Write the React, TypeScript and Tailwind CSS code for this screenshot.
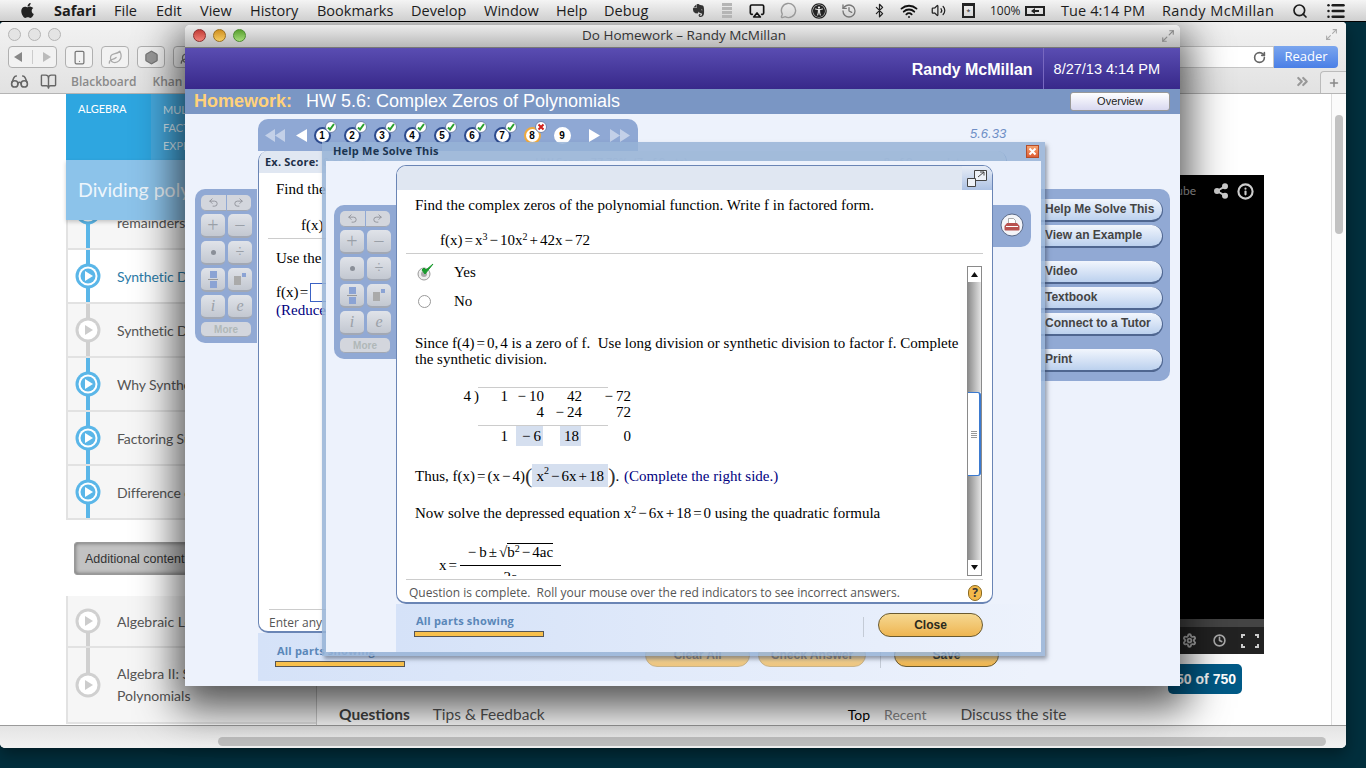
import { Airplay, Bluetooth, BookOpen, ChevronsRight, Glasses, Hexagon, Info, Leaf, List, Maximize2, MessageCircle, Plus, Redo2, RotateCw, Search, Settings, Share2, Smartphone, Undo2, Volume2, Wifi, History, Clock } from 'lucide-react'
import { FaApple, FaEvernote, FaUniversalAccess } from 'react-icons/fa'

const menus = [
  { label: 'File', w: 'w-[42px]' },
  { label: 'Edit', w: 'w-[44px]' },
  { label: 'View', w: 'w-[50px]' },
  { label: 'History', w: 'w-[67px]' },
  { label: 'Bookmarks', w: 'w-[94px]' },
  { label: 'Develop', w: 'w-[73px]' },
  { label: 'Window', w: 'w-[72px]' },
  { label: 'Help', w: 'w-[48px]' },
  { label: 'Debug', w: 'w-[60px]' },
]

function MenuBar() {
  return (
    <div className="relative z-30 flex h-[22px] items-center border-b border-black bg-gradient-to-b from-[#f4f4f4] to-[#cfcfcf] font-['Open_Sans',sans-serif] text-[14.5px] text-[#1c1c1c]">
      <FaApple className="ml-[19px] mr-[18px] text-[17px] text-[#222]" />
      <span className="w-[60px] font-bold">Safari</span>
      {menus.map(m => <span key={m.label} className={m.w}>{m.label}</span>)}
      <div className="ml-auto flex h-full items-center pr-[20px]">
        <span className="flex w-[28px] justify-center"><FaEvernote className="text-[15px] text-[#333]" /></span>
        <span className="flex w-[29px] flex-col items-center gap-[1px]">
          <i className="h-[3px] w-[10px] bg-[#b5b5b5]" /><i className="h-[3px] w-[10px] bg-[#b5b5b5]" /><i className="h-[3px] w-[10px] bg-[#b5b5b5]" /><i className="h-[3px] w-[10px] bg-[#b5b5b5]" />
        </span>
        <span className="flex w-[32px] justify-center"><Airplay size={16} strokeWidth={2.5} className="text-[#111]" /></span>
        <span className="flex w-[31px] justify-center"><MessageCircle size={17} className="text-[#999]" /></span>
        <span className="flex w-[30px] justify-center"><FaUniversalAccess className="text-[16px] text-[#222]" /></span>
        <span className="flex w-[30px] justify-center"><History size={16} className="text-[#777]" /></span>
        <span className="flex w-[30px] justify-center"><Bluetooth size={15} className="text-[#222]" /></span>
        <span className="flex w-[29px] justify-center"><Wifi size={18} strokeWidth={2.5} className="text-[#111]" /></span>
        <span className="flex w-[30px] justify-center"><Volume2 size={15} className="text-[#222]" /></span>
        <span className="flex w-[31px] justify-center">
          <span className="flex h-[15px] w-[13px] items-center justify-center border-[2px] border-t-[3px] border-[#222] text-[7px] leading-none text-[#222]">*</span>
        </span>
        <span className="ml-[6px] w-[35px] text-[12px]">100%</span>
        <span className="flex h-[10px] w-[20px] items-center justify-center border-[2px] border-[#222]">
          <svg width="8" height="6" viewBox="0 0 8 6"><path d="M0 3l4-3v2h4v2H4v2z" fill="#222" /></svg>
        </span>
        <span className="ml-[16px] w-[101px] tracking-[0.1px]">Tue 4:14 PM</span>
        <span className="w-[130px] tracking-[0.4px]">Randy McMillan</span>
        <Search size={16} strokeWidth={2.5} className="mr-[18px]" />
        <List size={20} strokeWidth={3} />
      </div>
    </div>
  )
}

function ToolBtn({ children }: { children: React.ReactNode }) {
  return <div className="flex h-[22px] w-[28px] items-center justify-center rounded-[4px] border border-[#b0b0b0] bg-[#f2f2f2] text-[#777]">{children}</div>
}

function SafariToolbar() {
  return (
    <div className="flex h-[72px] flex-col border-b border-[#b4b4b4] bg-gradient-to-b from-[#f2f2f2] to-[#e2e2e2]">
      <div className="flex h-[24px] items-center pl-[8px] pr-[6px]">
        <div className="flex gap-[7px]">
          <i className="h-[13px] w-[13px] rounded-full border border-[#b5b5b5] bg-[#e4e4e4]" />
          <i className="h-[13px] w-[13px] rounded-full border border-[#b5b5b5] bg-[#e4e4e4]" />
          <i className="h-[13px] w-[13px] rounded-full border border-[#b5b5b5] bg-[#e4e4e4]" />
        </div>
        <Maximize2 size={13} className="ml-auto mr-[2px] text-[#aaa]" />
      </div>
      <div className="flex h-[22px] items-center pl-[8px] pr-[8px]">
        <div className="flex h-[22px] w-[49px] items-center justify-around rounded-[4px] border border-[#b0b0b0] bg-[#f2f2f2]">
          <svg width="9" height="10" viewBox="0 0 9 10"><path d="M8 0v10L0 5z" fill="#888" /></svg>
          <i className="h-[14px] w-px bg-[#ccc]" />
          <svg width="9" height="10" viewBox="0 0 9 10"><path d="M1 0v10l8-5z" fill="#bbb" /></svg>
        </div>
        <div className="ml-[8px] flex gap-[8px]">
          <ToolBtn><Smartphone size={15} /></ToolBtn>
          <ToolBtn><Leaf size={15} className="text-[#aaa]" /></ToolBtn>
          <ToolBtn><Hexagon size={15} fill="#999" /></ToolBtn>
          <ToolBtn><Leaf size={15} /></ToolBtn>
        </div>
        <div className="ml-[8px] flex h-[22px] flex-1 items-center justify-end border border-[#c6c6c6] bg-white pr-[7px]">
          <RotateCw size={13} strokeWidth={3} className="text-[#666]" />
        </div>
        <div className="flex h-[22px] w-[64px] items-center justify-center rounded-r-[4px] bg-gradient-to-b from-[#7aa5ee] to-[#4a7fe6] font-['Open_Sans',sans-serif] text-[13px] text-white">Reader</div>
      </div>
      <div className="flex flex-1 items-center pl-[10px] pt-[2px] font-['Open_Sans',sans-serif] text-[12px] font-semibold text-[#8a8a8a]">
        <Glasses size={19} className="text-[#666]" />
        <BookOpen size={17} className="ml-[11px] text-[#666]" />
        <span className="ml-[14px]">Blackboard</span>
        <span className="ml-[16px]">Khan Academy</span>
        <ChevronsRight size={17} strokeWidth={3} className="ml-auto text-[#999]" />
        <div className="ml-[9px] flex h-[22px] w-[26px] items-center justify-center self-end rounded-tl-[4px] border-l border-t border-[#bbb] bg-[#ececec]">
          <Plus size={12} strokeWidth={3} className="text-[#888]" />
        </div>
      </div>
    </div>
  )
}

function PlayDot({ on }: { on: boolean }) {
  const c = on ? '#5ab6e8' : '#d0d0d0'
  return (
    <svg width="26" height="26" viewBox="0 0 26 26" className="relative shrink-0">
      <circle cx="13" cy="13" r="12.5" fill={c} />
      <circle cx="13" cy="13" r="9.5" fill="#fff" />
      {on && <circle cx="13" cy="13" r="7.5" fill={c} />}
      <path d="M10 8l8 5-8 5z" fill={on ? '#fff' : '#ccc'} />
    </svg>
  )
}

const lessons = [
  { t: 'Synthetic Division', on: true, active: true },
  { t: 'Synthetic Division', on: false, active: false },
  { t: 'Why Synthetic', on: true, active: false },
  { t: 'Factoring Sums', on: true, active: false },
  { t: 'Difference of', on: true, active: false },
]

function Lesson({ t, on, active }: { t: string; on: boolean; active: boolean }) {
  return (
    <div className={`relative flex h-[54px] items-center border-b-2 border-l-2 border-[#e2e2e2] pl-[7px] ${active ? 'bg-white' : 'bg-[#f6f6f6]'}`}>
      <i className={`absolute bottom-0 left-[18px] top-0 w-[4px] ${on ? 'bg-[#5ab6e8]' : 'bg-[#d0d0d0]'}`} />
      <PlayDot on={on} />
      <span className={`ml-[16px] font-['Lato',sans-serif] text-[14px] tracking-[-0.1px] ${active ? 'text-[#2b7ba8]' : 'text-[#555]'}`}>{t}</span>
    </div>
  )
}

function SafariWindow() {
  return (
    <div className="absolute left-0 top-[22px] flex h-[726px] w-[1346px] flex-col overflow-hidden rounded-b-[5px] rounded-t-[4px] bg-white shadow-[0_6px_16px_rgba(0,0,0,0.4)]">
      <SafariToolbar />
      <div className="flex h-[632px] border-b border-[#9a9a9a]">
        <div className="ml-[66px] flex w-[250px] flex-col">
          <div className="flex h-[66px] font-['Lato',sans-serif] text-[11px]">
            <div className="w-[85px] bg-[#2ea6e0] pl-[12px] pt-[7px] text-white">ALGEBRA</div>
            <div className="flex-1 bg-[#46a9de] pl-[12px] pt-[7px] leading-[18px] text-[#d8ecf8]">
              <p>MULTIPLYING</p><p>FACTORING</p><p>EXPRESSIONS</p>
            </div>
          </div>
          <div className="relative z-10 flex h-[60px] items-center bg-[#8cc3ea] pl-[12px] font-['Lato',sans-serif] text-[19.5px] text-[#eef6fc] shadow-[0_2px_4px_rgba(0,0,0,0.2)]">Dividing polynomials</div>
          <div className="relative -mt-[44px] flex h-[74px] items-center border-b-2 border-l-2 border-[#e2e2e2] bg-[#f6f6f6] pl-[7px]">
            <i className="absolute bottom-0 left-[18px] top-0 w-[4px] bg-[#5ab6e8]" />
            <PlayDot on />
            <span className="ml-[16px] self-end pb-[17px] font-['Lato',sans-serif] text-[14px] leading-[16px] text-[#555]">remainders</span>
          </div>
          {lessons.map((l, i) => <Lesson key={i} {...l} />)}
          <div className="ml-[8px] mt-[22px] flex h-[33px] items-center rounded-[3px] border border-[#999] bg-[#c2c2c2] pl-[10px] pt-[1px] font-['Liberation_Sans',sans-serif] text-[12.5px] text-[#333] shadow-[inset_0_0_4px_rgba(0,0,0,0.5)]">Additional content</div>
          <div className="relative mt-[21px] flex h-[52px] items-center border-b-2 border-l-2 border-[#e2e2e2] bg-[#f6f6f6] pl-[7px]">
            <i className="absolute bottom-0 left-[18px] top-[26px] w-[4px] bg-[#d0d0d0]" />
            <PlayDot on={false} />
            <span className="ml-[16px] font-['Lato',sans-serif] text-[14px] text-[#555]">Algebraic Long</span>
          </div>
          <div className="relative flex h-[76px] items-center border-b-2 border-l-2 border-[#e2e2e2] bg-[#f6f6f6] pl-[7px]">
            <i className="absolute bottom-[38px] left-[18px] top-0 w-[4px] bg-[#d0d0d0]" />
            <PlayDot on={false} />
            <span className="ml-[16px] font-['Lato',sans-serif] text-[14px] leading-[22px] text-[#555]">Algebra II: Synthetic<br />Polynomials</span>
          </div>
        </div>
        <div className="flex flex-1 border-l border-[#ccc]">
          <div className="relative flex-1">
            <div className="ml-auto mr-[67px] mt-[81px] flex h-[479px] w-[640px] flex-col bg-black">
              <div className="flex h-[30px] items-center justify-end pr-[10px] pt-[2px] font-['Lato',sans-serif] text-[12px] text-[#aaa]">
                <span className="mr-[17px]">YouTube</span>
                <Share2 size={16} strokeWidth={3} fill="#ccc" className="mr-[8px] text-[#ccc]" />
                <Info size={17} strokeWidth={3} className="text-[#ccc]" />
              </div>
              <div className="flex-1" />
              <div className="h-[8px] bg-[#444]" />
              <div className="flex h-[27px] items-center justify-end bg-[#222] pr-[5px] text-[#aaa]">
                <Settings size={15} strokeWidth={3} className="mr-[16px]" />
                <Clock size={13} strokeWidth={3} className="mr-[15px]" />
                <div className="grid h-[14px] w-[18px] grid-cols-2 grid-rows-2 justify-between">
                  <i className="h-[4px] w-[4px] border-l-2 border-t-2 border-[#ccc]" />
                  <i className="ml-auto h-[4px] w-[4px] border-r-2 border-t-2 border-[#ccc]" />
                  <i className="mt-auto h-[4px] w-[4px] border-b-2 border-l-2 border-[#ccc]" />
                  <i className="ml-auto mt-auto h-[4px] w-[4px] border-b-2 border-r-2 border-[#ccc]" />
                </div>
              </div>
            </div>
            <div className="ml-[851px] mt-[10px] flex h-[30px] w-[74px] items-center justify-end rounded-[5px] bg-[#005a87] pr-[6px] font-['Liberation_Sans',sans-serif] text-[14px] font-bold text-white">750 of 750</div>
            <div className="mt-[9px] flex items-center pl-[22px] font-['Lato',sans-serif] text-[15.5px] text-[#555]">
              <span className="font-bold text-[#444]">Questions</span>
              <span className="ml-[23px]">Tips &amp; Feedback</span>
              <span className="ml-[303px] text-[14px] text-black">Top</span>
              <span className="ml-[14px] text-[14px] text-[#888]">Recent</span>
              <span className="ml-[34px]">Discuss the site</span>
            </div>
          </div>
          <div className="w-[15px] border-l border-[#ddd] bg-[#fbfbfb] pl-[3px] pt-[21px]">
            <div className="h-[119px] w-[8px] rounded-full bg-[#c2c2c2]" />
          </div>
        </div>
      </div>
      <div className="flex flex-1 bg-gradient-to-b from-[#e4e4e4] to-[#f2f2f2]">
        <div className="ml-[218px] mt-[11px] h-[9px] w-[1108px] rounded-full bg-[#c0c0c0]" />
      </div>
    </div>
  )
}

function CalcKey({ children }: { children: React.ReactNode }) {
  return (
    <div className="flex h-[24px] w-[24px] items-center justify-center rounded-[5px] border-b-2 border-[#a2a8b4] bg-gradient-to-b from-[#e0e3e9] to-[#c3c8d1] font-['Liberation_Serif',serif] text-[#9aa0a8]">{children}</div>
  )
}

function CalcPad() {
  return (
    <div className="flex h-[154px] w-[62px] flex-col rounded-l-[10px] bg-[#91a9d4] pl-[6px] pt-[6px]">
      <div className="flex h-[16px] w-[50px] gap-[1px] text-[#8f9299]">
        <div className="flex flex-1 items-center justify-center rounded-l-[5px] border-b border-[#a2a8b4] bg-[#d3d6dd]"><Undo2 size={11} strokeWidth={2} /></div>
        <div className="flex flex-1 items-center justify-center rounded-r-[5px] border-b border-[#a2a8b4] bg-[#d3d6dd]"><Redo2 size={11} strokeWidth={2} /></div>
      </div>
      <div className="mt-[3px] grid w-[51px] grid-cols-2 gap-[3px]">
        <CalcKey><span className="text-[20px] leading-none">+</span></CalcKey>
        <CalcKey><span className="text-[20px] leading-none">−</span></CalcKey>
        <CalcKey><i className="h-[5px] w-[5px] rounded-full bg-[#8a8f98]" /></CalcKey>
        <CalcKey><span className="text-[16px] leading-none">÷</span></CalcKey>
        <CalcKey>
          <span className="flex flex-col items-center gap-[1px]">
            <i className="h-[7px] w-[7px] bg-[#8ba3d4]" /><i className="h-[1px] w-[10px] bg-[#999]" /><i className="h-[7px] w-[7px] bg-[#8ba3d4]" />
          </span>
        </CalcKey>
        <CalcKey>
          <span className="flex items-start gap-[1px]">
            <i className="mt-[3px] h-[9px] w-[7px] bg-[#aaa]" /><i className="h-[4px] w-[4px] bg-[#8ba3d4]" />
          </span>
        </CalcKey>
        <CalcKey><span className="text-[16px] italic leading-none">i</span></CalcKey>
        <CalcKey><span className="text-[16px] italic leading-none">e</span></CalcKey>
      </div>
      <div className="mt-[3px] flex h-[15px] w-[50px] items-center justify-center rounded-[5px] border-b border-[#a2a8b4] bg-[#d3d6dd] font-['Liberation_Sans',sans-serif] text-[10px] font-bold text-[#b0b8b8]">More</div>
    </div>
  )
}

const steps = [1, 2, 3, 4, 5, 6, 7, 8, 9]

function StepDot({ n }: { n: number }) {
  const wrong = n === 8
  const last = n === 9
  return (
    <div className="relative flex w-[30px] justify-center">
      <div className={`flex h-[17px] w-[17px] items-center justify-center rounded-full border-2 bg-white font-['Liberation_Sans',sans-serif] text-[10px] font-bold text-black ${wrong ? 'border-[#f0aa3c]' : last ? 'border-white' : 'border-[#2d4b8e]'}`}>{n}</div>
      {!last && (
        <div className="absolute left-[18px] top-[-6px] flex h-[12px] w-[12px] items-center justify-center rounded-full border border-[#6f83ad] bg-white">
          {wrong
            ? <svg width="8" height="8" viewBox="0 0 8 8"><path d="M1.5 1.5l5 5M6.5 1.5l-5 5" stroke="#d0201c" strokeWidth="2" /></svg>
            : <svg width="8" height="8" viewBox="0 0 8 8"><path d="M1 4.5l2 2 4-5.5" stroke="#2aa02c" strokeWidth="2" fill="none" /></svg>}
        </div>
      )}
    </div>
  )
}

function StepNav() {
  return (
    <div className="flex h-[32px] w-[380px] items-center rounded-t-[10px] bg-[#8fa8d4]">
      <svg width="20" height="13" viewBox="0 0 20 13" className="ml-[7px]"><path d="M10 0v13L0 6.5zM20 0v13L10 6.5z" fill="#c3d0e8" /></svg>
      <svg width="11" height="13" viewBox="0 0 11 13" className="ml-[11px]"><path d="M11 0v13L0 6.5z" fill="#fff" /></svg>
      {steps.map(n => <StepDot key={n} n={n} />)}
      <svg width="11" height="13" viewBox="0 0 11 13" className="ml-[12px]"><path d="M0 0v13l11-6.5z" fill="#fff" /></svg>
      <svg width="20" height="13" viewBox="0 0 20 13" className="ml-[10px]"><path d="M0 0v13l10-6.5zM10 0v13l10-6.5z" fill="#c3d0e8" /></svg>
    </div>
  )
}

function ExercisePanel() {
  return (
    <div className="flex h-[482px] w-[749px] flex-col overflow-hidden rounded-[10px] border-b-2 border-l border-r border-[#6a85b5] bg-white">
      <div className="flex h-[22px] shrink-0 items-center bg-[#e0e7f2] pl-[6px] pr-[40px] font-['Open_Sans',sans-serif] text-[11px] text-[#c3cddb]">
        <span className="w-[58px] font-bold tracking-[0.2px] text-[#1d2f48]">Ex. Score:</span>
        <span>0 of 1 pt</span>
        <span className="ml-[170px]">HW Score: 77.78%, (7 of 9 pts)</span>
        <span className="ml-auto">8 of 9, complete</span>
      </div>
      <div className="flex-1 pl-[17px] font-['Liberation_Serif',serif] text-[15px] leading-[17px] text-black">
        <p className="mt-[8px]">Find the</p>
        <p className="ml-[25px] mt-[19px]">f(x)</p>
        <div className="-ml-[8px] mt-[4px] h-px w-[720px] bg-[#ccc]" />
        <p className="mt-[11px]">Use the</p>
        <div className="mt-[16px] flex items-center">
          <span>f(x)&#8202;=</span>
          <i className="ml-[2px] h-[19px] w-[30px] border border-[#3b62c4]" />
        </div>
        <p className="text-[#000080]">(Reduced)</p>
      </div>
      <div className="mx-[10px] flex h-[22px] shrink-0 items-center border-t border-[#ccc] pt-[5px] font-['Open_Sans',sans-serif] text-[12px] text-[#555]">Enter any</div>
    </div>
  )
}

function PillBtn({ children, muted, w = 'w-[105px]' }: { children: React.ReactNode; muted?: boolean; w?: string }) {
  return (
    <div className={`flex h-[24px] ${w} items-center justify-center rounded-full border bg-gradient-to-b font-['Liberation_Sans',sans-serif] text-[12px] font-bold ${muted ? 'border-[#c9b48a] from-[#f5dfae] to-[#eec680] text-[#8a8072]' : 'border-[#6a5a30] from-[#f5d890] to-[#eeb550] text-[#2b2b1e]'}`}>{children}</div>
  )
}

function PartsProgress() {
  return (
    <div className="flex flex-col">
      <span className="ml-[2px] font-['Open_Sans',sans-serif] text-[11px] font-bold leading-[14px] tracking-[0.2px] text-[#5a87b8]">All parts showing</span>
      <i className="mt-[3px] h-[6px] w-[130px] border border-[#555] bg-[#f8c04c]" />
    </div>
  )
}

const sideBtns = [
  { label: 'Help Me Solve This', gap: 'mt-0' },
  { label: 'View an Example', gap: 'mt-[3px]' },
  { label: 'Video', gap: 'mt-[13px]' },
  { label: 'Textbook', gap: 'mt-[3px]' },
  { label: 'Connect to a Tutor', gap: 'mt-[3px]' },
  { label: 'Print', gap: 'mt-[13px]' },
]

function SideTools() {
  return (
    <div className="ml-[9px] mt-[75px] flex h-[192px] w-[130px] flex-col rounded-r-[10px] bg-[#91a9d4] pt-[10px]">
      {sideBtns.map(b => (
        <div key={b.label} className={`${b.gap} flex h-[23px] w-[123px] items-center rounded-r-full border-b-2 border-r border-[#4f6690] bg-gradient-to-b from-[#f2f6fd] to-[#bcd1ee] pb-[2px] pl-[5px] font-['Liberation_Sans',sans-serif] text-[12px] font-bold text-[#444]`}>{b.label}</div>
      ))}
    </div>
  )
}

function ScrollBar() {
  return (
    <div className="mt-[12px] flex w-[15px] shrink-0 flex-col border border-[#8a8a8a]">
      <div className="flex h-[15px] items-center justify-center bg-white">
        <svg width="7" height="5" viewBox="0 0 7 5"><path d="M3.5 0L7 5H0z" fill="#111" /></svg>
      </div>
      <div className="h-[110px] bg-gradient-to-r from-[#8d8d8d] to-[#e4e4e4]" />
      <div className="flex h-[84px] flex-col items-center justify-center gap-[1px] rounded-r-[3px] border-b border-r-2 border-t border-[#3b7ad0] bg-white">
        <i className="h-px w-[6px] bg-[#999]" /><i className="h-px w-[6px] bg-[#999]" /><i className="h-px w-[6px] bg-[#999]" /><i className="h-px w-[6px] bg-[#999]" />
      </div>
      <div className="flex-1 bg-gradient-to-r from-[#8d8d8d] to-[#e4e4e4]" />
      <div className="flex h-[15px] items-center justify-center bg-white">
        <svg width="7" height="5" viewBox="0 0 7 5"><path d="M0 0h7L3.5 5z" fill="#111" /></svg>
      </div>
    </div>
  )
}

function Sq({ children, w }: { children: React.ReactNode; w: string }) {
  return <span className={`mr-[1px] inline-block h-[20px] ${w} bg-[#d5dfef] pr-[2px] text-right leading-[20px]`}>{children}</span>
}

// math operator with the tight side bearings of the player's typesetting
function Op({ children }: { children: React.ReactNode }) {
  return <span className="mx-[2px]">{children}</span>
}

function Sup({ children }: { children: React.ReactNode }) {
  return <sup className="text-[10px]">{children}</sup>
}

function SolutionBody() {
  return (
    <div className="flex-1 overflow-hidden pl-[18px] font-['Liberation_Serif',serif] text-[15px] leading-[16px] text-black">
      <div className="mt-[9px] flex items-center">
        <svg width="22" height="18" viewBox="0 0 22 18">
          <circle cx="9" cy="11" r="6" fill="#eee" stroke="#999" />
          <circle cx="9" cy="11" r="3" fill="#aaa" />
          <path d="M7 7l3 4 8-10-7 6-2-2z" fill="#189a2c" stroke="#189a2c" />
        </svg>
        <span className="ml-[17px]">Yes</span>
      </div>
      <div className="mt-[12px] flex items-center">
        <i className="ml-[3px] h-[13px] w-[13px] rounded-full border border-[#999] bg-white" />
        <span className="ml-[23px]">No</span>
      </div>
      <p className="mt-[26px] w-[548px] whitespace-pre-wrap">Since f(4)<Op>=</Op>0,<span className="ml-[2px]">4</span> {'is a zero of f.  Use long division or synthetic division to factor f. Complete the synthetic division.'}</p>
      <div className="ml-[63px] mt-[20px] h-px w-[130px] bg-[#ccc]" />
      <div className="ml-[48px] grid w-[168px] grid-cols-[16px_29px_36px_38px_49px] text-right">
        <span className="whitespace-nowrap">4<span className="ml-[3px]">)</span></span><span>1</span><span>−&#8201;10</span><span>42</span><span>−&#8201;72</span>
        <span /><span /><span>4</span><span>−&#8201;24</span><span>72</span>
      </div>
      <div className="ml-[63px] mt-[5px] h-px w-[130px] bg-[#ccc]" />
      <div className="ml-[48px] grid h-[20px] w-[168px] grid-cols-[16px_29px_36px_38px_49px] text-right leading-[20px]">
        <span /><span>1</span><span><Sq w="w-[27px]">−&#8201;6</Sq></span><span><Sq w="w-[21px]">18</Sq></span><span>0</span>
      </div>
      <div className="mt-[18px] flex h-[23px] items-center whitespace-pre">
        <span>Thus, f(x)<Op>=</Op>(x<Op>−</Op>4)</span>
        <span className="text-[22px] font-light leading-none text-[#333]">(</span>
        <span className="flex h-[23px] w-[76px] items-center justify-center bg-[#d5dfef]">x<Sup>2</Sup><Op>−</Op>6x<Op>+</Op>18</span>
        <span className="text-[22px] font-light leading-none text-[#333]">)</span>
        <span>.{'\u00a0'}</span><span className="ml-[1px] text-[#000080]">(Complete the right side.)</span>
      </div>
      <p className="mt-[18px]">Now solve the depressed equation x<Sup>2</Sup><Op>−</Op>6x<Op>+</Op>18<Op>=</Op>0 using the quadratic formula</p>
      <div className="ml-[24px] mt-[23px] flex items-center">
        <span>x<Op>=</Op></span>
        <div className="ml-[1px] flex w-[101px] flex-col items-center">
          <span className="mb-[5px] whitespace-pre">−&#8201;b<Op>±</Op>√<span className="border-t border-black">b<Sup>2</Sup><Op>−</Op>4ac</span></span>
          <i className="h-px w-full bg-black" />
          <span className="pt-[3px]">2a</span>
        </div>
      </div>
    </div>
  )
}

function HelpDialog() {
  return (
    <div className="absolute left-[137px] top-[28px] flex h-[514px] w-[723px] flex-col bg-[#97b3d6]/85 shadow-[2px_3px_4px_rgba(60,70,90,0.5)]">
      <div className="flex h-[19px] shrink-0 items-center justify-between pl-[11px] pr-[6px]">
        <span className="font-['Open_Sans',sans-serif] text-[11px] font-bold tracking-[0.2px] text-[#1b3551]">Help Me Solve This</span>
        <span className="flex h-[13px] w-[13px] items-center justify-center border border-[#b44d2a] bg-gradient-to-b from-[#f6a36f] to-[#dd5c34]">
          <svg width="9" height="9" viewBox="0 0 9 9"><path d="M1.5 1.5l6 6M7.5 1.5l-6 6" stroke="#fff" strokeWidth="2" /></svg>
        </span>
      </div>
      <div className="mx-[4px] mb-[4px] flex flex-1 bg-[#edf2fc]">
        <div className="w-[70px] shrink-0 pl-[8px] pt-[44px]"><CalcPad /></div>
        <div className="flex flex-1 flex-col pt-[4px]">
          <div className="flex h-[439px]">
            <div className="flex w-[597px] flex-col overflow-hidden rounded-[10px] border-b-2 border-l border-r border-t border-[#6a85b5] bg-white">
              <div className="flex h-[24px] shrink-0 justify-end bg-[#e0e7f2]">
                <div className="flex w-[30px] items-center justify-center bg-gradient-to-b from-[#e8edf6] to-[#adc2e4]">
                  <svg width="20" height="18" viewBox="0 0 20 18" fill="#eef2f8" stroke="#444">
                    <path d="M7.5 1.5h12v10h-12z" />
                    <path d="M.5 9.5h8v8h-8z" />
                    <path d="M11 8l6-5M13 3h4v3.5" fill="none" />
                  </svg>
                </div>
              </div>
              <div className="h-[63px] shrink-0 font-['Liberation_Serif',serif] text-[15px] leading-[16px] text-black">
                <p className="pl-[18px] pt-[7px]">Find the complex zeros of the polynomial function. Write f in factored form.</p>
                <p className="pl-[43px] pt-[19px]">f(x)<Op>=</Op>x<Sup>3</Sup><Op>−</Op>10x<Sup>2</Sup><Op>+</Op>42x<Op>−</Op>72</p>
              </div>
              <div className="mx-[9px] h-px shrink-0 bg-[#ccc]" />
              <div className="flex flex-1 overflow-hidden pr-[10px]">
                <SolutionBody />
                <ScrollBar />
              </div>
              <div className="mx-[9px] mt-[3px] h-px shrink-0 bg-[#ccc]" />
              <div className="flex h-[22px] shrink-0 items-center justify-between pl-[12px] pr-[10px] pt-[4px] font-['Open_Sans',sans-serif] text-[12px] text-[#555]">
                <span className="whitespace-pre">{'Question is complete.  Roll your mouse over the red indicators to see incorrect answers.'}</span>
                <span className="flex h-[16px] w-[14px] items-center justify-center rounded-full border border-[#8a6a20] bg-[#f3b94a] font-bold leading-none text-[#333]">?</span>
              </div>
            </div>
            <div className="mt-[40px] flex h-[42px] w-[38px] items-center justify-end rounded-r-[10px] bg-[#91a9d4] pr-[7px]">
              <svg width="24" height="24" viewBox="0 0 24 24" className="-mt-[2px]">
                <circle cx="12" cy="12" r="11" fill="#f3f4f8" stroke="#5a6a88" />
                <path d="M8.5 5.5h5l2 2v3.5h-7z" fill="#fff" stroke="#888" strokeWidth=".7" />
                <path d="M7 10h10l2.5 3v3.5a1 1 0 0 1-1 1h-13a1 1 0 0 1-1-1V13z" fill="#b85250" />
                <path d="M6 13.5h12" stroke="#fff" />
              </svg>
            </div>
          </div>
          <div className="flex flex-1 items-start bg-gradient-to-r from-[#d5e2f8] to-[#edf2fc] pl-[18px] pt-[9px]">
            <div className="mt-[1px]"><PartsProgress /></div>
            <i className="ml-[319px] mt-[4px] h-[20px] w-px bg-[#c4cbd6]" />
            <div className="ml-[14px]"><PillBtn>Close</PillBtn></div>
          </div>
        </div>
      </div>
    </div>
  )
}

function HomeworkWindow() {
  return (
    <div className="absolute left-[185px] top-[25px] z-20 flex h-[661px] w-[995px] flex-col rounded-t-[5px] bg-[#edf2fc] shadow-[0_14px_42px_8px_rgba(0,0,0,0.68)]">
      <div className="flex h-[23px] shrink-0 items-center rounded-t-[5px] border-b border-[#777] bg-gradient-to-b from-[#ececec] to-[#b8b8b8] pb-[1px] pl-[8px] pr-[5px]">
        <div className="flex w-[53px] gap-[7px]">
          <i className="h-[13px] w-[13px] shrink-0 rounded-full border border-[#8a3030] bg-gradient-to-b from-[#c23a36] to-[#f08078]" />
          <i className="h-[13px] w-[13px] shrink-0 rounded-full border border-[#9a7020] bg-gradient-to-b from-[#d0901c] to-[#f4cc60]" />
          <i className="h-[13px] w-[13px] shrink-0 rounded-full border border-[#4c8a30] bg-gradient-to-b from-[#58a02c] to-[#a4dc78]" />
        </div>
        <span className="flex-1 text-center font-['Open_Sans',sans-serif] text-[13.5px] text-[#333]">Do Homework – Randy McMillan</span>
        <div className="flex w-[53px] justify-end"><Maximize2 size={14} className="text-[#888]" /></div>
      </div>
      <div className="flex h-[41px] shrink-0 items-center justify-end bg-gradient-to-b from-[#5a4db2] to-[#38288a] font-['Liberation_Sans',sans-serif] text-white">
        <span className="mt-[2px] text-[16px] font-bold">Randy McMillan</span>
        <i className="ml-[10px] h-full w-px bg-[#7868c0]" />
        <span className="ml-[10px] mr-[20px] mt-[2px] text-[14.5px]">8/27/13 4:14 PM</span>
      </div>
      <div className="flex h-[25px] shrink-0 items-center bg-[#7a96c4] pl-[9px] pr-[10px] font-['Liberation_Sans',sans-serif] text-[18px]">
        <span className="font-bold text-[#ffd27a]">Homework:</span>
        <span className="ml-[14px] text-white">HW 5.6: Complex Zeros of Polynomials</span>
        <div className="ml-auto flex h-[19px] w-[100px] items-center justify-center rounded-[3px] border border-[#999] bg-gradient-to-b from-white to-[#d8d8f0] text-[11px] text-[#222]">Overview</div>
      </div>
      <div className="relative flex flex-1 pl-[10px]">
        <div className="w-[62px] shrink-0 pt-[75px]"><CalcPad /></div>
        <div className="flex w-[774px] shrink-0 flex-col pl-px">
          <div className="flex h-[37px] shrink-0 items-start pt-[5px]">
            <StepNav />
            <span className="ml-[332px] mt-[5px] font-['Liberation_Sans',sans-serif] text-[13px] italic text-[#6f8fc6]">5.6.33</span>
          </div>
          <ExercisePanel />
          <div className="flex h-[48px] items-start bg-gradient-to-r from-[#d5e2f8] to-[#edf2fc] pl-[17px] pt-[11px]">
            <PartsProgress />
            <div className="ml-[240px] -mt-[1px] flex gap-[8px]">
              <PillBtn muted>Clear All</PillBtn>
              <PillBtn muted w="w-[108px]">Check Answer</PillBtn>
            </div>
            <i className="ml-[14px] h-[24px] w-px bg-[#c4cbd6]" />
            <div className="ml-[13px] -mt-[1px]"><PillBtn>Save</PillBtn></div>
          </div>
        </div>
        <SideTools />
        <HelpDialog />
      </div>
    </div>
  )
}

export default function App() {
  return (
    <div className="relative h-[768px] w-[1366px] overflow-hidden bg-[#022f3d]">
      <MenuBar />
      <SafariWindow />
      <HomeworkWindow />
    </div>
  )
}
